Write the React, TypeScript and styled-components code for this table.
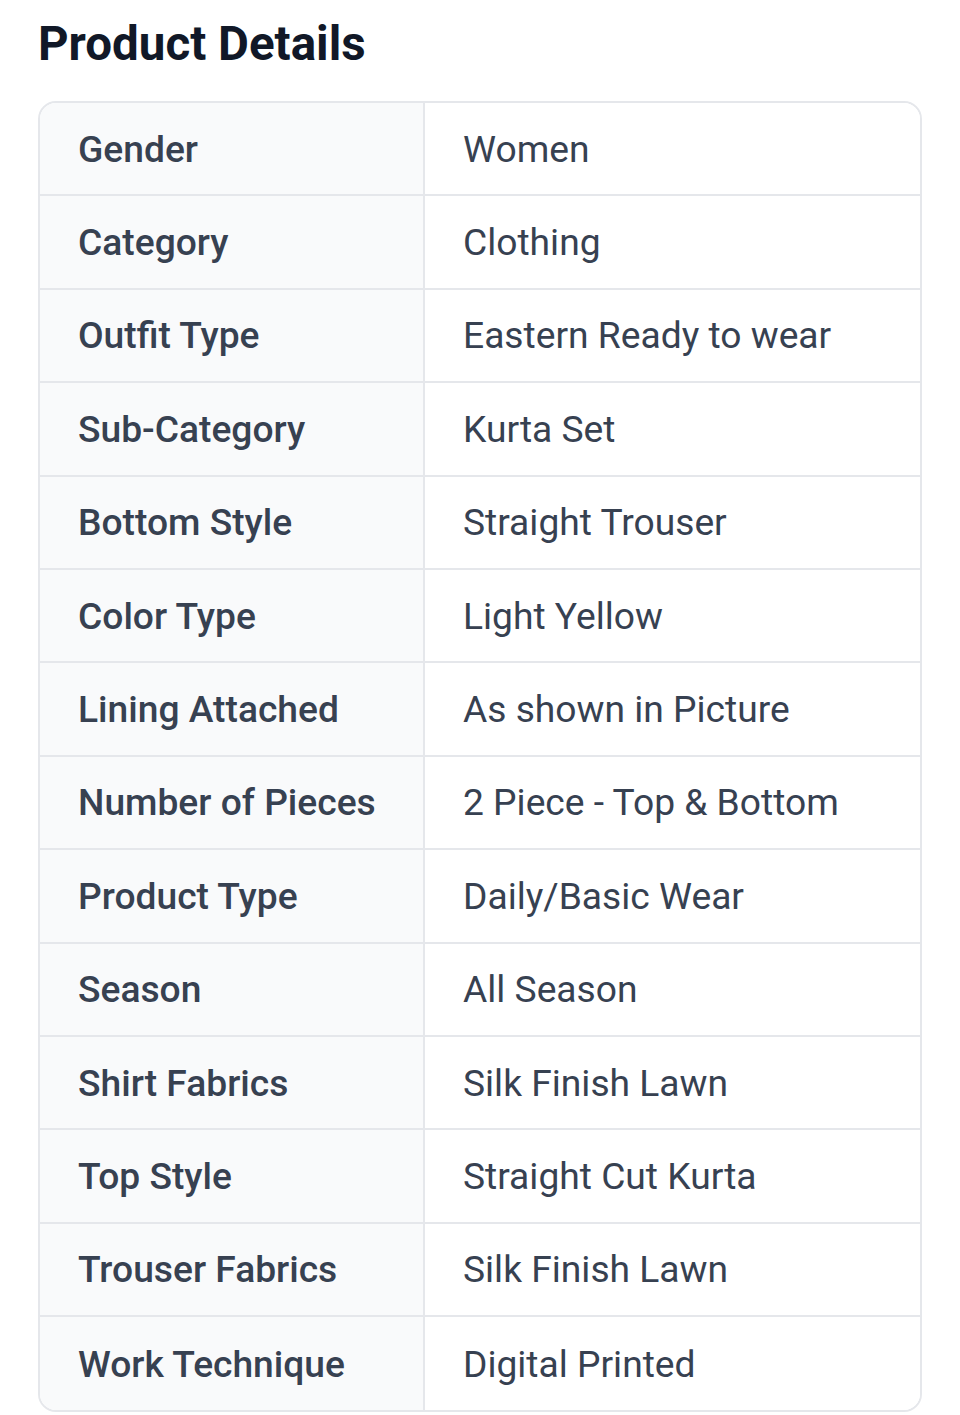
import React from 'react';
import styled, { createGlobalStyle } from 'styled-components';

const GlobalStyle = createGlobalStyle`
  html, body {
    margin: 0;
    padding: 0;
    background: #ffffff;
  }
  body {
    font-family: Roboto, "Noto Sans", Arial, sans-serif;
    -webkit-font-smoothing: antialiased;
  }
`;

const Page = styled.div`
  padding: 16px 38px 0 38px;
`;

const Title = styled.h2`
  margin: 0 0 28px 0;
  font-size: 47.5px;
  line-height: 1.2;
  font-weight: 700;
  color: #111827;
`;

const Table = styled.div`
  border: 2px solid #e5e7eb;
  border-radius: 18px;
  overflow: hidden;
`;

const Row = styled.div<{ $last?: boolean }>`
  display: grid;
  grid-template-columns: 385px 1fr;
  height: 93.4px;
  box-sizing: border-box;
  border-bottom: ${(p) => (p.$last ? 'none' : '2px solid #e5e7eb')};
`;

const Cell = styled.div<{ $label?: boolean }>`
  display: flex;
  align-items: center;
  padding: 0 38px;
  font-size: 37.2px;
  color: #374151;
  font-weight: ${(p) => (p.$label ? 500 : 400)};
  background: ${(p) => (p.$label ? '#f9fafb' : '#ffffff')};
  border-right: ${(p) => (p.$label ? '2px solid #e5e7eb' : 'none')};
  white-space: nowrap;
`;

interface Detail {
  label: string;
  value: string;
}

const details: Detail[] = [
  { label: 'Gender', value: 'Women' },
  { label: 'Category', value: 'Clothing' },
  { label: 'Outfit Type', value: 'Eastern Ready to wear' },
  { label: 'Sub-Category', value: 'Kurta Set' },
  { label: 'Bottom Style', value: 'Straight Trouser' },
  { label: 'Color Type', value: 'Light Yellow' },
  { label: 'Lining Attached', value: 'As shown in Picture' },
  { label: 'Number of Pieces', value: '2 Piece - Top & Bottom' },
  { label: 'Product Type', value: 'Daily/Basic Wear' },
  { label: 'Season', value: 'All Season' },
  { label: 'Shirt Fabrics', value: 'Silk Finish Lawn' },
  { label: 'Top Style', value: 'Straight Cut Kurta' },
  { label: 'Trouser Fabrics', value: 'Silk Finish Lawn' },
  { label: 'Work Technique', value: 'Digital Printed' },
];

const App = () => {
  return (
    <Page>
      <GlobalStyle />
      <Title>Product Details</Title>
      <Table>
        {details.map(({ label, value }, i) => (
          <Row key={label} $last={i === details.length - 1}>
            <Cell $label>{label}</Cell>
            <Cell>{value}</Cell>
          </Row>
        ))}
      </Table>
    </Page>
  );
};

export default App;
